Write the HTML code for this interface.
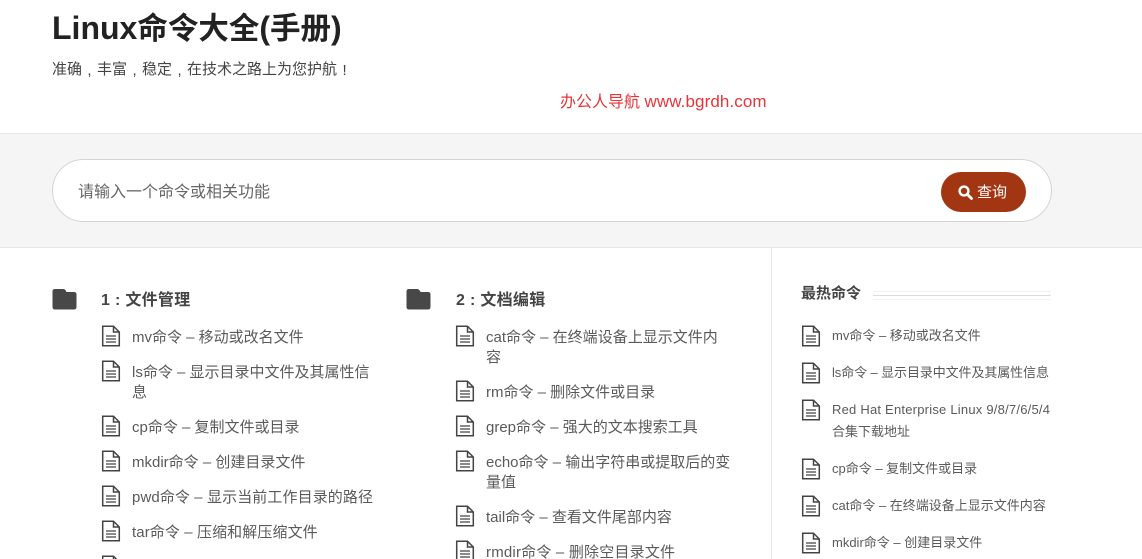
<!DOCTYPE html>
<html lang="zh"><head><meta charset="utf-8"><title>Linux命令大全(手册)</title>
<style>
*{margin:0;padding:0;box-sizing:border-box}
html,body{width:1142px;height:559px;overflow:hidden;background:#fff}
body{position:relative;font-family:"Liberation Sans","Noto Sans CJK SC",sans-serif;color:#555}
.t{position:absolute;white-space:nowrap}
.m{font-size:15px;line-height:20px;color:#5a5a5a}
.s{font-size:13px;line-height:20px;color:#5a5a5a}
.h{font-size:16px;line-height:22px;font-weight:700;color:#444;letter-spacing:.3px}
svg.d{position:absolute;width:20px;height:22px}
svg.f{position:absolute;width:25px;height:21px}
.c{display:inline-block;width:15px;text-align:center;position:relative;top:1px}
.k{font-size:30.5px}
</style></head><body>
<svg width="0" height="0" style="position:absolute"><defs>
<symbol id="doc" viewBox="0 0 20 22"><path d="M1.7 1.2H12.5L18.3 7V20.8H1.7Z M12.5 1.2V7H18.3" fill="none" stroke="#444" stroke-width="1.5"/><path d="M5 11H15M5 14H15M5 17H15" stroke="#444" stroke-width="1.2"/></symbol>
<symbol id="fold" viewBox="0 0 25 21"><path d="M3 0H11Q13 0 14 2L14.5 3H22Q24.5 3 24.5 5.5V18Q24.5 20.5 22 20.5H3Q.5 20.5 .5 18V2.5Q.5 0 3 0Z" fill="#484848"/></symbol>
</defs></svg>

<div class="t" style="left:52px;top:7px;font-size:32px;line-height:42px;font-weight:700;color:#222">Linux<span class="k">命令大全</span>(<span class="k">手册</span>)</div>
<div class="t" style="left:52px;top:59px;font-size:15px;line-height:21px;color:#444">准确<span class="c">,</span>丰富<span class="c">,</span>稳定<span class="c">,</span>在技术之路上为您护航<span class="c">!</span></div>
<div class="t" style="left:560px;top:91px;font-size:16px;line-height:22px;color:#e8343a">办公人导航 <span style="font-size:17px;letter-spacing:.1px">www.bgrdh.com</span></div>

<div style="position:absolute;left:0;top:133px;width:1142px;height:115px;background:#f5f5f5;border-top:1px solid #e6e6e6;border-bottom:1px solid #e6e6e6"></div>
<div style="position:absolute;left:52px;top:159px;width:1000px;height:63px;background:#fff;border:1px solid #d4d4d4;border-radius:32px"></div>
<div class="t" style="left:78px;top:181px;font-size:16px;line-height:23px;color:#666">请输入一个命令或相关功能</div>
<div style="position:absolute;left:941px;top:172px;width:85px;height:40px;background:#a33612;border-radius:20px"></div>
<svg style="position:absolute;left:958px;top:185px" width="15" height="15" viewBox="0 0 15 15"><circle cx="6" cy="6" r="4.4" fill="none" stroke="#fff" stroke-width="2.4"/><path d="M9.5 9.5L13.5 13.5" stroke="#fff" stroke-width="2.8" stroke-linecap="round"/></svg>
<div class="t" style="left:977px;top:182px;font-size:15px;line-height:21px;color:#fff">查询</div>

<div style="position:absolute;left:771px;top:248px;width:1px;height:311px;background:#e6e6e6"></div>

<svg class="f" style="left:52px;top:289px"><use href="#fold"/></svg>
<div class="t h" style="left:101px;top:290px">1 : 文件管理</div>
<svg class="d" style="left:101px;top:325px"><use href="#doc"/></svg><div class="t m" style="left:132px;top:328px">mv命令 – 移动或改名文件</div>
<svg class="d" style="left:101px;top:360px"><use href="#doc"/></svg><div class="t m" style="left:132px;top:363px">ls命令 – 显示目录中文件及其属性信</div><div class="t m" style="left:132px;top:383px">息</div>
<svg class="d" style="left:101px;top:415px"><use href="#doc"/></svg><div class="t m" style="left:132px;top:418px">cp命令 – 复制文件或目录</div>
<svg class="d" style="left:101px;top:450px"><use href="#doc"/></svg><div class="t m" style="left:132px;top:453px">mkdir命令 – 创建目录文件</div>
<svg class="d" style="left:101px;top:485px"><use href="#doc"/></svg><div class="t m" style="left:132px;top:488px;letter-spacing:.1px">pwd命令 – 显示当前工作目录的路径</div>
<svg class="d" style="left:101px;top:520px"><use href="#doc"/></svg><div class="t m" style="left:132px;top:523px;letter-spacing:.1px">tar命令 – 压缩和解压缩文件</div>
<svg class="d" style="left:101px;top:555px"><use href="#doc"/></svg>

<svg class="f" style="left:406px;top:289px"><use href="#fold"/></svg>
<div class="t h" style="left:456px;top:290px">2 : 文档编辑</div>
<svg class="d" style="left:455px;top:325px"><use href="#doc"/></svg><div class="t m" style="left:486px;top:328px">cat命令 – 在终端设备上显示文件内</div><div class="t m" style="left:486px;top:348px">容</div>
<svg class="d" style="left:455px;top:380px"><use href="#doc"/></svg><div class="t m" style="left:486px;top:383px">rm命令 – 删除文件或目录</div>
<svg class="d" style="left:455px;top:415px"><use href="#doc"/></svg><div class="t m" style="left:486px;top:418px">grep命令 – 强大的文本搜索工具</div>
<svg class="d" style="left:455px;top:450px"><use href="#doc"/></svg><div class="t m" style="left:486px;top:453px">echo命令 – 输出字符串或提取后的变</div><div class="t m" style="left:486px;top:473px">量值</div>
<svg class="d" style="left:455px;top:505px"><use href="#doc"/></svg><div class="t m" style="left:486px;top:508px">tail命令 – 查看文件尾部内容</div>
<svg class="d" style="left:455px;top:540px"><use href="#doc"/></svg><div class="t m" style="left:486px;top:543px;letter-spacing:.2px">rmdir命令 – 删除空目录文件</div>

<div class="t" style="left:801px;top:284px;font-size:15px;line-height:20px;font-weight:700;color:#444">最热命令</div>
<div style="position:absolute;left:873px;top:291px;width:178px;height:9px;border-top:1px solid #f2f2f2;border-bottom:1px solid #f2f2f2"></div>
<div style="position:absolute;left:873px;top:295px;width:178px;height:1px;background:#ddd"></div>

<svg class="d" style="left:801px;top:325px"><use href="#doc"/></svg><div class="t s" style="left:832px;top:326px">mv命令 – 移动或改名文件</div>
<svg class="d" style="left:801px;top:362px"><use href="#doc"/></svg><div class="t s" style="left:832px;top:363px;letter-spacing:-.1px">ls命令 – 显示目录中文件及其属性信息</div>
<svg class="d" style="left:801px;top:399px"><use href="#doc"/></svg><div class="t s" style="left:832px;top:400px;letter-spacing:.22px">Red Hat Enterprise Linux 9/8/7/6/5/4</div><div class="t s" style="left:832px;top:422px">合集下载地址</div>
<svg class="d" style="left:801px;top:458px"><use href="#doc"/></svg><div class="t s" style="left:832px;top:459px">cp命令 – 复制文件或目录</div>
<svg class="d" style="left:801px;top:495px"><use href="#doc"/></svg><div class="t s" style="left:832px;top:496px">cat命令 – 在终端设备上显示文件内容</div>
<svg class="d" style="left:801px;top:532px"><use href="#doc"/></svg><div class="t s" style="left:832px;top:533px">mkdir命令 – 创建目录文件</div>
</body></html>
